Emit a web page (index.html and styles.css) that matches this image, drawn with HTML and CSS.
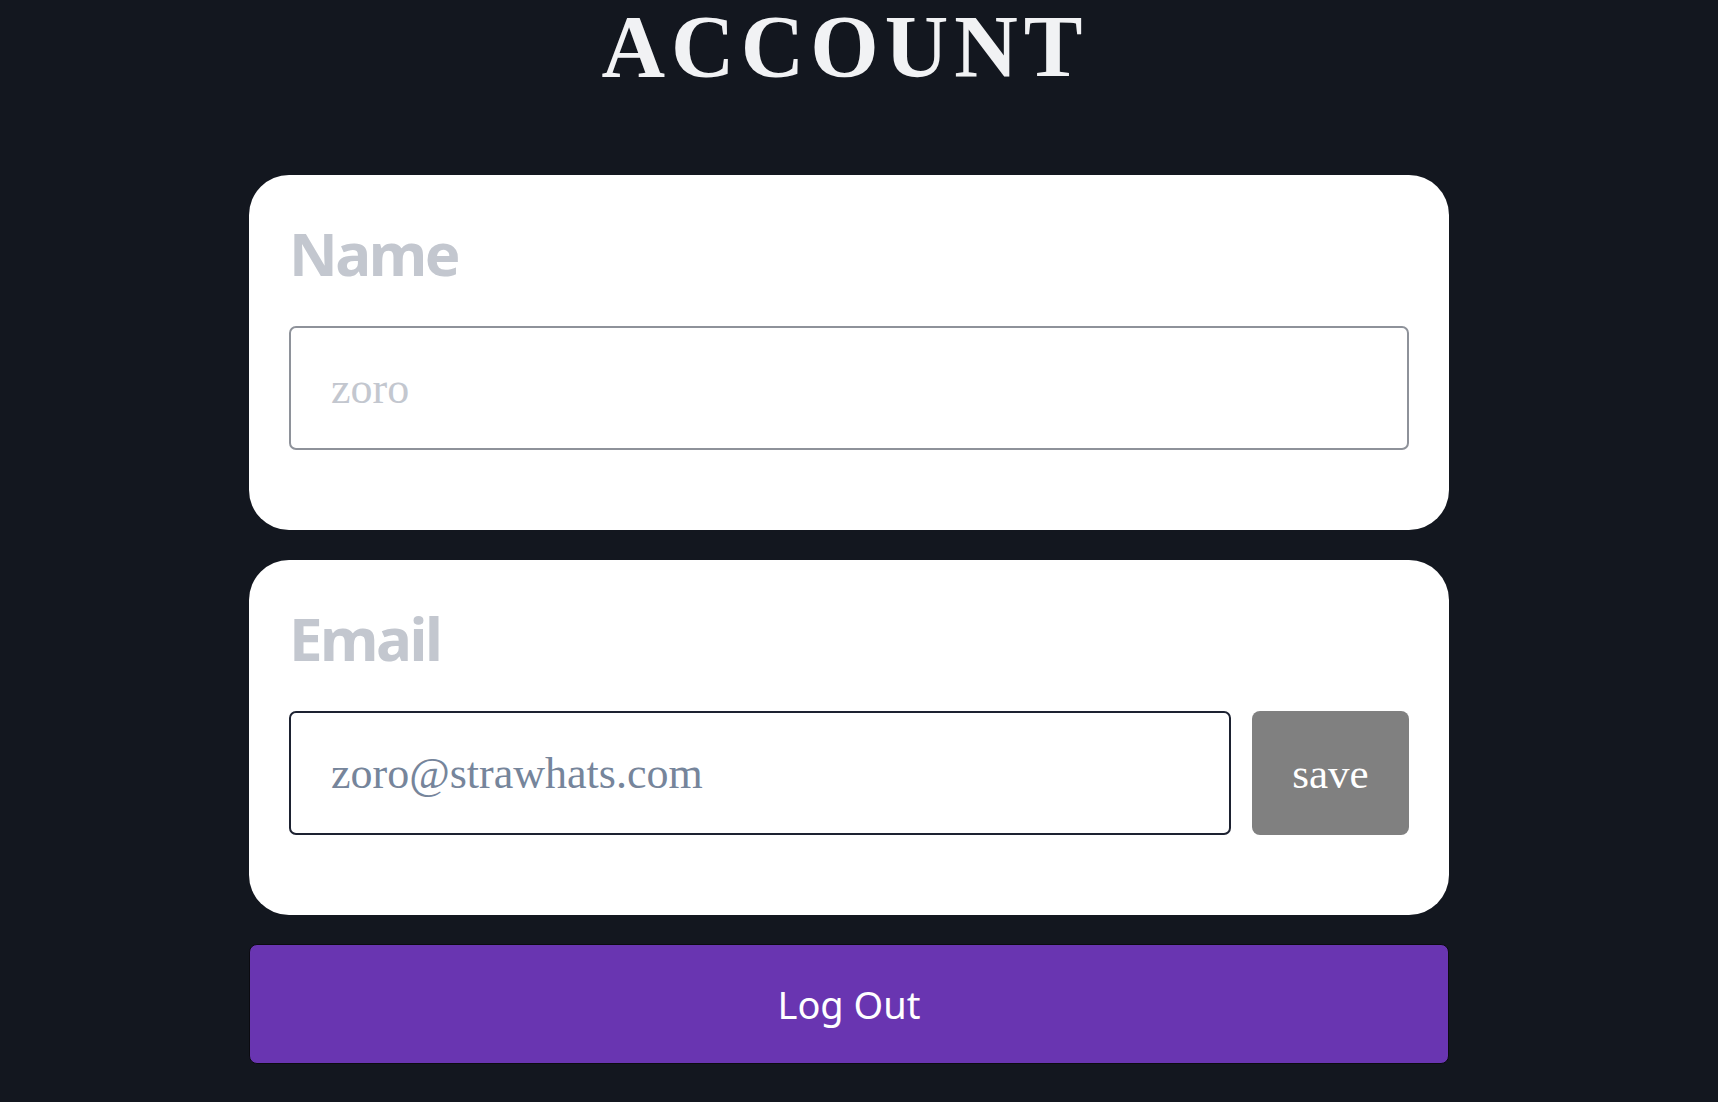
FILE: index.html
```html
<!DOCTYPE html>
<html lang="en">
<head>
<meta charset="utf-8">
<title>Account</title>
<link rel="stylesheet" href="styles.css">
</head>
<body>
  <main class="page">
    <h1 class="title">ACCOUNT</h1>
    <section class="card">
      <h2 class="label">Name</h2>
      <div class="row">
        <input class="field field-name" type="text" placeholder="zoro">
      </div>
    </section>
    <section class="card">
      <h2 class="label">Email</h2>
      <div class="row">
        <input class="field field-email" type="email" value="zoro@strawhats.com">
        <button class="save" type="button">save</button>
      </div>
    </section>
    <button class="logout" type="button">Log Out</button>
  </main>
</body>
</html>
```

FILE: styles.css
```css
html, body {
  margin: 0;
  padding: 0;
}

body {
  background: #13171f;
  padding-right: 20px;
  min-height: 1102px;
  box-sizing: border-box;
}

.page {
  width: 1200px;
  margin: 0 auto;
  display: flex;
  flex-direction: column;
}

.title {
  margin: 0;
  padding-top: 3px;
  padding-right: 8px;
  font-family: "Liberation Serif", "Times New Roman", serif;
  font-weight: 700;
  font-size: 88px;
  line-height: 88px;
  letter-spacing: 6px;
  color: #f1f2f4;
  text-align: center;
}

.card {
  margin-top: 30px;
  background: #ffffff;
  border-radius: 40px;
  padding: 48px 40px 80px;
  display: flex;
  flex-direction: column;
}

.title + .card {
  margin-top: 84px;
}

.label {
  margin: 0 0 43px;
  font-family: "Noto Sans", "Open Sans", sans-serif;
  font-weight: 700;
  font-size: 60px;
  line-height: 60px;
  letter-spacing: -2.5px;
  color: #c3c7cf;
}

.row {
  display: flex;
  gap: 21px;
}

.field {
  flex: 1;
  min-width: 0;
  height: 124px;
  box-sizing: border-box;
  border-radius: 7px;
  padding: 0 40px;
  font-family: "Liberation Serif", "Times New Roman", serif;
  font-size: 44px;
  background: #ffffff;
  outline: none;
}

.field-name {
  border: 2px solid #8e929a;
}

.field-name::placeholder {
  color: #c3c7cf;
  opacity: 1;
}

.field-email {
  border: 2px solid #1d2231;
  color: #76859b;
}

.save {
  width: 157px;
  height: 124px;
  border: none;
  border-radius: 8px;
  background: #808080;
  color: #ffffff;
  font-family: "Liberation Serif", "Times New Roman", serif;
  font-size: 43px;
  padding: 0;
}

.logout {
  margin-top: 29px;
  height: 120px;
  border: 1px solid #0b0b10;
  border-radius: 8px;
  background: #6935b1;
  color: #ffffff;
  font-family: "Noto Sans", "Open Sans", sans-serif;
  font-size: 38px;
  padding: 0;
}
```
